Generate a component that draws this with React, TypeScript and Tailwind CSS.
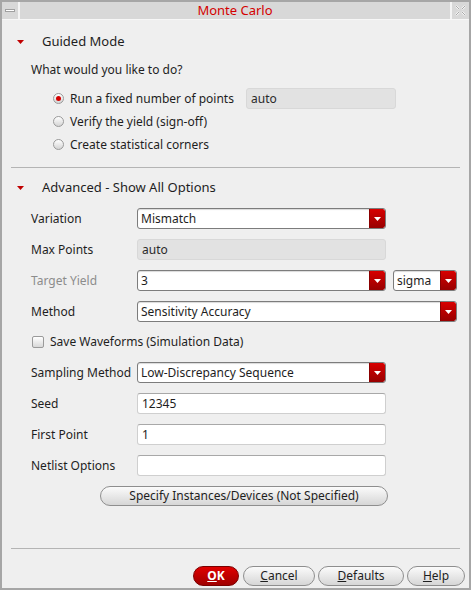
import React from "react";

function Arrow() {
  return (
    <div className="w-[16px] h-full flex items-center justify-center bg-gradient-to-b from-[#d80000] to-[#980000] rounded-r-[2px] border-l border-[#8a0000]">
      <svg width="7" height="4" viewBox="0 0 7 4">
        <path d="M0 0H7L3.5 4Z" fill="#ffffff" />
      </svg>
    </div>
  );
}

function Select({ value, className }: { value: string; className: string }) {
  return (
    <div className={`flex h-[21px] rounded-[3px] border border-[#7c7c7c] bg-white overflow-hidden shadow-[inset_0_1px_1px_rgba(0,0,0,0.15)] ${className}`}>
      <div className="flex-1 pl-[3px] leading-[19px] text-[12px] text-[#1e1e1e]">{value}</div>
      <Arrow />
    </div>
  );
}

function TextField({ value, className }: { value: string; className: string }) {
  return (
    <div className={`h-[21px] rounded-[3px] border border-[#cfcfcf] border-t-[#a8a8a8] bg-white pl-[4px] leading-[19px] text-[12px] text-[#1e1e1e] ${className}`}>
      {value}
    </div>
  );
}

function Disabled({ value, className }: { value: string; className: string }) {
  return (
    <div className={`h-[21px] rounded-[3px] border border-[#d8d8d8] bg-[#e2e2e2] pl-[4px] leading-[19px] text-[12px] text-[#2a2a2a] ${className}`}>
      {value}
    </div>
  );
}

function Radio({ on }: { on?: boolean }) {
  return (
    <div className="w-[11px] h-[11px] rounded-full border border-[#9a9a9a] bg-gradient-to-b from-[#ffffff] to-[#d4d4d4] flex items-center justify-center">
      {on && <div className="w-[5px] h-[5px] rounded-full bg-[#d40000]" />}
    </div>
  );
}

function Tri() {
  return (
    <svg width="7" height="4" viewBox="0 0 7 4">
      <path d="M0 0H7L3.5 4Z" fill="#c00000" />
    </svg>
  );
}

function Row({ label, gray, children }: { label: string; gray?: boolean; children: React.ReactNode }) {
  return (
    <div className="flex items-center h-[21px] ml-[29px]">
      <div className={`w-[106px] text-[12px] ${gray ? "text-[#8c8c8c]" : "text-[#1e1e1e]"}`}>{label}</div>
      {children}
    </div>
  );
}

function Btn({ children, className }: { children: React.ReactNode; className: string }) {
  return (
    <div className={`h-[20px] rounded-[10px] border border-[#8e8e8e] bg-gradient-to-b from-[#fbfbfb] to-[#d6d6d6] flex items-center justify-center text-[12px] text-[#1e1e1e] ${className}`}>
      {children}
    </div>
  );
}

export default function App() {
  return (
    <div className="w-[471px] h-[590px] bg-[#efefef] border-2 border-t-2 border-[#a6a6a6] flex flex-col font-['Noto_Sans',sans-serif] text-[12px] text-[#1e1e1e] overflow-hidden">
      {/* title bar */}
      <div className="flex h-[17px] border-b border-[#f7f7f7] gap-[2px] bg-[#f4f4f4] box-content">
        <div className="w-[16px] bg-[#d8d8d8] flex items-center justify-center">
          <div className="w-[10px] h-[3px] bg-white border border-[#a0a0a0]" />
        </div>
        <div className="flex-1 bg-[#d8d8d8] flex items-center justify-center text-[13px] text-[#d40000] leading-none">Monte Carlo</div>
        <div className="w-[17px] bg-[#d8d8d8] flex items-center justify-center">
          <svg width="11" height="11" viewBox="0 0 11 11">
            <path d="M1 1L4 4M10 1L7 4M1 10L4 7M10 10L7 7" stroke="#f8f8f8" strokeWidth="2" />
            <path d="M1 1L4 4M10 1L7 4M1 10L4 7M10 10L7 7" stroke="#a8a8a8" strokeWidth="1" />
          </svg>
        </div>
      </div>

      {/* Guided */}
      <div className="flex items-center h-[20px] mt-[12px] ml-[15px]">
        <Tri />
        <span className="ml-[18px] text-[13px]">Guided Mode</span>
      </div>
      <div className="flex items-center h-[20px] mt-[8px] ml-[29px] text-[12px]">What would you like to do?</div>
      <div className="flex flex-col mt-[7px] ml-[51px]">
        <div className="flex items-center h-[23px]">
          <Radio on />
          <span className="ml-[6px] w-[176px] text-[12px]">Run a fixed number of points</span>
          <Disabled value="auto" className="w-[150px] h-[20px]" />
        </div>
        <div className="flex items-center h-[23px]">
          <Radio />
          <span className="ml-[6px] text-[12px]">Verify the yield (sign-off)</span>
        </div>
        <div className="flex items-center h-[23px]">
          <Radio />
          <span className="ml-[6px] text-[12px]">Create statistical corners</span>
        </div>
      </div>
      <div className="mt-[11px] mx-[9px] h-px bg-[#b4b4b4]" />

      {/* Advanced */}
      <div className="flex items-center h-[20px] mt-[10px] ml-[15px]">
        <Tri />
        <span className="ml-[18px] text-[13px]">Advanced - Show All Options</span>
      </div>
      <div className="flex flex-col gap-[10px] mt-[10px]">
        <Row label="Variation">
          <Select value="Mismatch" className="w-[249px]" />
        </Row>
        <Row label="Max Points">
          <Disabled value="auto" className="w-[249px]" />
        </Row>
        <Row label="Target Yield" gray>
          <Select value="3" className="w-[249px]" />
          <Select value="sigma" className="w-[64px] ml-[7px]" />
        </Row>
        <Row label="Method">
          <Select value="Sensitivity Accuracy" className="w-[320px]" />
        </Row>
      </div>
      <div className="flex items-center h-[20px] mt-[10px] ml-[30px]">
        <div className="w-[12px] h-[12px] rounded-[2px] border border-[#9a9a9a] bg-gradient-to-b from-[#ffffff] to-[#d8d8d8]" />
        <span className="ml-[6px] text-[12px]">Save Waveforms (Simulation Data)</span>
      </div>
      <div className="flex flex-col gap-[10px] mt-[10px]">
        <Row label="Sampling Method">
          <Select value="Low-Discrepancy Sequence" className="w-[249px]" />
        </Row>
        <Row label="Seed">
          <TextField value="12345" className="w-[249px]" />
        </Row>
        <Row label="First Point">
          <TextField value="1" className="w-[249px]" />
        </Row>
        <Row label="Netlist Options">
          <TextField value="" className="w-[249px]" />
        </Row>
      </div>
      <div className="flex mt-[10px] ml-[98px]">
        <Btn className="w-[288px]">Specify Instances/Devices (Not Specified)</Btn>
      </div>

      <div className="mt-[42px] mx-[9px] h-px bg-[#b4b4b4]" />

      <div className="flex justify-end mt-[17px] mr-[4px] gap-[3px]">
        <div className="w-[46px] h-[20px] mr-[1px] rounded-[10px] border border-[#7a0000] bg-gradient-to-b from-[#e00000] to-[#a00000] flex items-center justify-center text-[12px] font-bold text-white">
          <span><span className="underline">O</span>K</span>
        </div>
        <Btn className="w-[72px]"><span><span className="underline">C</span>ancel</span></Btn>
        <Btn className="w-[86px]"><span><span className="underline">D</span>efaults</span></Btn>
        <Btn className="w-[58px]"><span><span className="underline">H</span>elp</span></Btn>
      </div>
    </div>
  );
}
